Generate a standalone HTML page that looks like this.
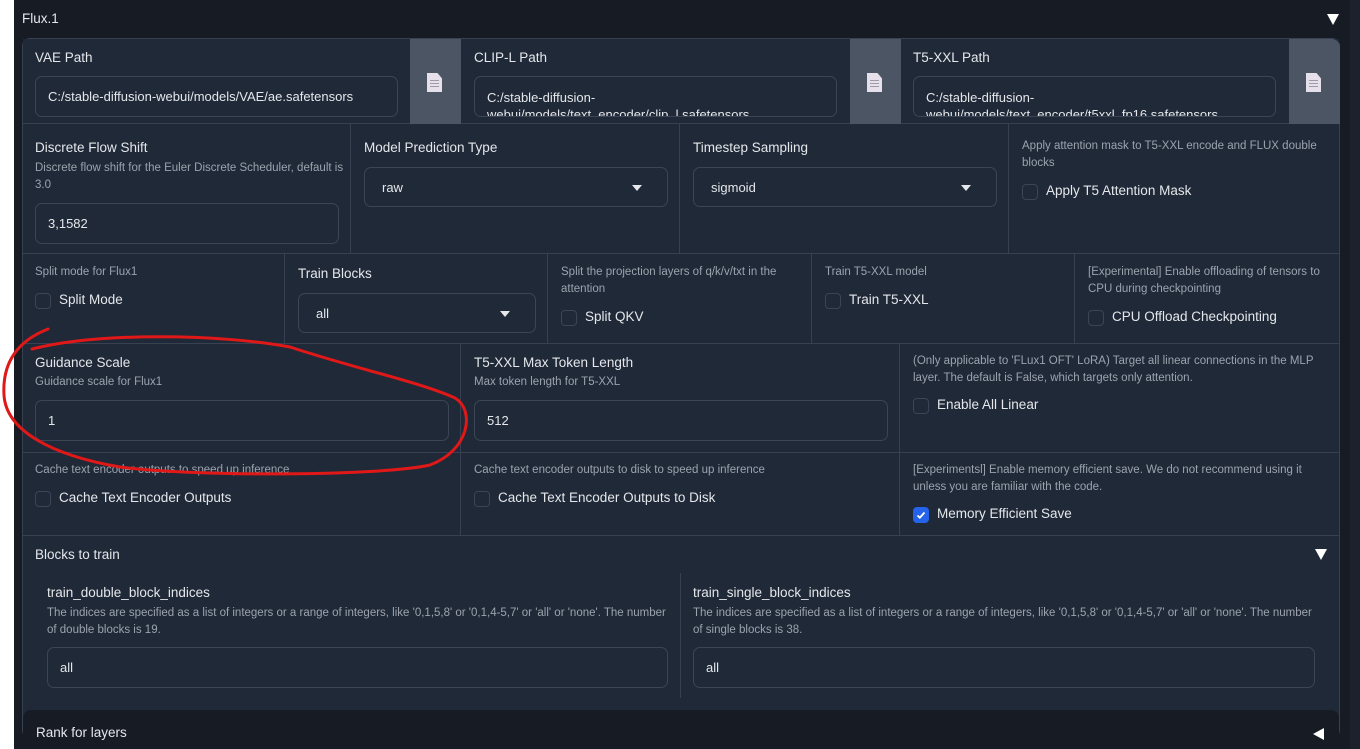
<!DOCTYPE html>
<html><head><meta charset="utf-8"><style>
*{box-sizing:border-box;margin:0;padding:0}
body{width:1360px;height:749px;overflow:hidden;background:#fff;font-family:"Liberation Sans",sans-serif;position:relative}
.outer{position:absolute;left:14px;top:0;width:1336px;height:749px;background:#161b24}
.rstrip{position:absolute;left:1350px;top:0;width:10px;height:749px;background:#1c212b}
.a{position:absolute}
.panel{position:absolute;left:22px;top:38px;width:1318px;height:700px;background:#1f2937;border:1px solid #374151;border-radius:8px}
.cell{position:absolute;background:#1f2937;border-right:1px solid #374151;border-bottom:1px solid #374151}
.lbl{position:absolute;color:#e5e7eb;font-size:13.5px}
.info{position:absolute;color:#9ca3af;font-size:11.5px;line-height:17px}
.inp{position:absolute;border:1px solid #3b4556;border-radius:7px;background:#1f2937;color:#e5e7eb;font-size:13px;padding-left:12px;display:flex;align-items:center;overflow:hidden}
.btn{position:absolute;background:#4b5563;top:0;height:85px;width:51px}
.doc{position:absolute;left:17px;top:34px;width:15px;height:19px;background:#e6e0ea;clip-path:polygon(0 0,70% 0,100% 28%,100% 100%,0 100%)}
.doc i{position:absolute;left:3px;height:1px;width:9px;background:#a09aa8}
.cb{position:absolute;width:16px;height:16px;border:1px solid #3b4556;border-radius:4px;background:#1f2937}
.cbl{position:absolute;color:#e5e7eb;font-size:13.5px}
.arr{position:absolute;width:0;height:0;border-left:5px solid transparent;border-right:5px solid transparent;border-top:6px solid #e5e7eb}
</style></head><body>
<div class="outer"></div><div class="rstrip"></div>
<div class="a" style="left:22px;top:11px;color:#e5e7eb;font-size:13.5px">Flux.1</div>
<div class="a" style="left:1327px;top:14px;width:0;height:0;border-left:6px solid transparent;border-right:6px solid transparent;border-top:11px solid #fff"></div>
<div class="panel"></div>
<!-- row1 -->
<div class="cell" style="left:23px;top:39px;width:438px;height:85px"></div>
<div class="cell" style="left:461px;top:39px;width:439px;height:85px"></div>
<div class="cell" style="left:900px;top:39px;width:439px;height:85px;border-right:none"></div>
<div class="lbl" style="left:35px;top:50px">VAE Path</div>
<div class="lbl" style="left:474px;top:50px">CLIP-L Path</div>
<div class="lbl" style="left:913px;top:50px">T5-XXL Path</div>
<div class="inp" style="left:35px;top:76px;width:363px;height:41px">C:/stable-diffusion-webui/models/VAE/ae.safetensors</div>
<div class="inp" style="left:474px;top:76px;width:363px;height:41px;align-items:flex-start;padding-top:12px;line-height:17px">C:/stable-diffusion-<br>webui/models/text_encoder/clip_l.safetensors</div>
<div class="inp" style="left:913px;top:76px;width:363px;height:41px;align-items:flex-start;padding-top:12px;line-height:17px">C:/stable-diffusion-<br>webui/models/text_encoder/t5xxl_fp16.safetensors</div>
<div class="btn" style="left:410px;top:39px"><div class="doc"><i style="top:7px"></i><i style="top:10px"></i><i style="top:13px"></i></div></div>
<div class="btn" style="left:850px;top:39px"><div class="doc"><i style="top:7px"></i><i style="top:10px"></i><i style="top:13px"></i></div></div>
<div class="btn" style="left:1289px;top:39px;border-top-right-radius:8px"><div class="doc"><i style="top:7px"></i><i style="top:10px"></i><i style="top:13px"></i></div></div>
<!-- row2 -->
<div class="cell" style="left:23px;top:124px;width:328px;height:130px"></div>
<div class="cell" style="left:351px;top:124px;width:329px;height:130px"></div>
<div class="cell" style="left:680px;top:124px;width:329px;height:130px"></div>
<div class="cell" style="left:1009px;top:124px;width:330px;height:130px;border-right:none"></div>
<div class="lbl" style="left:35px;top:140px">Discrete Flow Shift</div>
<div class="info" style="left:35px;top:160px;width:310px">Discrete flow shift for the Euler Discrete Scheduler, default is 3.0</div>
<div class="inp" style="left:35px;top:203px;width:304px;height:41px">3,1582</div>
<div class="lbl" style="left:364px;top:140px">Model Prediction Type</div>
<div class="inp" style="left:364px;top:167px;width:304px;height:40px;padding-left:17px">raw</div>
<div class="arr" style="left:632px;top:185px"></div>
<div class="lbl" style="left:693px;top:140px">Timestep Sampling</div>
<div class="inp" style="left:693px;top:167px;width:304px;height:40px;padding-left:17px">sigmoid</div>
<div class="arr" style="left:961px;top:185px"></div>
<div class="info" style="left:1022px;top:138px;width:310px">Apply attention mask to T5-XXL encode and FLUX double blocks</div>
<div class="cb" style="left:1022px;top:184px"></div><div class="cbl" style="left:1046px;top:183px">Apply T5 Attention Mask</div>
<!-- row3 -->
<div class="cell" style="left:23px;top:254px;width:262px;height:90px"></div>
<div class="cell" style="left:285px;top:254px;width:263px;height:90px"></div>
<div class="cell" style="left:548px;top:254px;width:264px;height:90px"></div>
<div class="cell" style="left:812px;top:254px;width:263px;height:90px"></div>
<div class="cell" style="left:1075px;top:254px;width:264px;height:90px;border-right:none"></div>
<div class="info" style="left:35px;top:264px">Split mode for Flux1</div>
<div class="cb" style="left:35px;top:293px"></div><div class="cbl" style="left:59px;top:292px">Split Mode</div>
<div class="lbl" style="left:298px;top:266px">Train Blocks</div>
<div class="inp" style="left:298px;top:293px;width:238px;height:40px;padding-left:17px">all</div>
<div class="arr" style="left:500px;top:311px"></div>
<div class="info" style="left:561px;top:264px;width:240px">Split the projection layers of q/k/v/txt in the attention</div>
<div class="cb" style="left:561px;top:310px"></div><div class="cbl" style="left:585px;top:309px">Split QKV</div>
<div class="info" style="left:825px;top:264px">Train T5-XXL model</div>
<div class="cb" style="left:825px;top:293px"></div><div class="cbl" style="left:849px;top:292px">Train T5-XXL</div>
<div class="info" style="left:1088px;top:264px;width:250px">[Experimental] Enable offloading of tensors to CPU during checkpointing</div>
<div class="cb" style="left:1088px;top:310px"></div><div class="cbl" style="left:1112px;top:309px">CPU Offload Checkpointing</div>
<!-- row4 -->
<div class="cell" style="left:23px;top:344px;width:438px;height:109px"></div>
<div class="cell" style="left:461px;top:344px;width:439px;height:109px"></div>
<div class="cell" style="left:900px;top:344px;width:439px;height:109px;border-right:none"></div>
<div class="lbl" style="left:35px;top:355px">Guidance Scale</div>
<div class="info" style="left:35px;top:374px">Guidance scale for Flux1</div>
<div class="inp" style="left:35px;top:400px;width:414px;height:41px">1</div>
<div class="lbl" style="left:474px;top:355px">T5-XXL Max Token Length</div>
<div class="info" style="left:474px;top:374px">Max token length for T5-XXL</div>
<div class="inp" style="left:474px;top:400px;width:414px;height:41px">512</div>
<div class="info" style="left:913px;top:353px;width:425px">(Only applicable to 'FLux1 OFT' LoRA) Target all linear connections in the MLP layer. The default is False, which targets only attention.</div>
<div class="cb" style="left:913px;top:398px"></div><div class="cbl" style="left:937px;top:397px">Enable All Linear</div>
<!-- row5 -->
<div class="cell" style="left:23px;top:453px;width:438px;height:83px"></div>
<div class="cell" style="left:461px;top:453px;width:439px;height:83px"></div>
<div class="cell" style="left:900px;top:453px;width:439px;height:83px;border-right:none"></div>
<div class="info" style="left:35px;top:462px">Cache text encoder outputs to speed up inference</div>
<div class="cb" style="left:35px;top:491px"></div><div class="cbl" style="left:59px;top:490px">Cache Text Encoder Outputs</div>
<div class="info" style="left:474px;top:462px">Cache text encoder outputs to disk to speed up inference</div>
<div class="cb" style="left:474px;top:491px"></div><div class="cbl" style="left:498px;top:490px">Cache Text Encoder Outputs to Disk</div>
<div class="info" style="left:913px;top:462px;width:410px">[Experimentsl] Enable memory efficient save. We do not recommend using it unless you are familiar with the code.</div>
<div class="cb" style="left:913px;top:507px;background:#2563eb;border-color:#2563eb"><svg width="14" height="14" viewBox="0 0 14 14" style="position:absolute;left:0;top:0"><path d="M3.5 7.5l2.3 2.2L10.5 4.5" stroke="#fff" stroke-width="1.8" fill="none"/></svg></div><div class="cbl" style="left:937px;top:506px">Memory Efficient Save</div>
<!-- blocks to train -->
<div class="lbl" style="left:35px;top:547px">Blocks to train</div>
<div class="a" style="left:1315px;top:549px;width:0;height:0;border-left:6px solid transparent;border-right:6px solid transparent;border-top:11px solid #fff"></div>
<div class="a" style="left:680px;top:573px;width:1px;height:125px;background:#374151"></div>
<div class="lbl" style="left:47px;top:585px">train_double_block_indices</div>
<div class="info" style="left:47px;top:605px;width:625px">The indices are specified as a list of integers or a range of integers, like '0,1,5,8' or '0,1,4-5,7' or 'all' or 'none'. The number of double blocks is 19.</div>
<div class="inp" style="left:47px;top:647px;width:621px;height:41px">all</div>
<div class="lbl" style="left:693px;top:585px">train_single_block_indices</div>
<div class="info" style="left:693px;top:605px;width:625px">The indices are specified as a list of integers or a range of integers, like '0,1,5,8' or '0,1,4-5,7' or 'all' or 'none'. The number of single blocks is 38.</div>
<div class="inp" style="left:693px;top:647px;width:622px;height:41px">all</div>
<!-- rank -->
<div class="a" style="left:23px;top:710px;width:1316px;height:39px;background:#161b24;border-top-left-radius:8px;border-top-right-radius:8px"></div>
<div class="lbl" style="left:36px;top:725px">Rank for layers</div>
<div class="a" style="left:1313px;top:728px;width:0;height:0;border-top:6px solid transparent;border-bottom:6px solid transparent;border-right:11px solid #fff"></div>
<svg class="a" style="left:0;top:0" width="1360" height="749"><path d="M48,329 C20,340 2,360 4,395 C6,430 50,455 120,467 C200,477 380,476 430,465 C470,450 475,410 455,398 C420,382 360,370 290,347 C220,334 100,332 32,349" stroke="#e01818" stroke-width="3" fill="none" stroke-linecap="round"/></svg>
</body></html>
